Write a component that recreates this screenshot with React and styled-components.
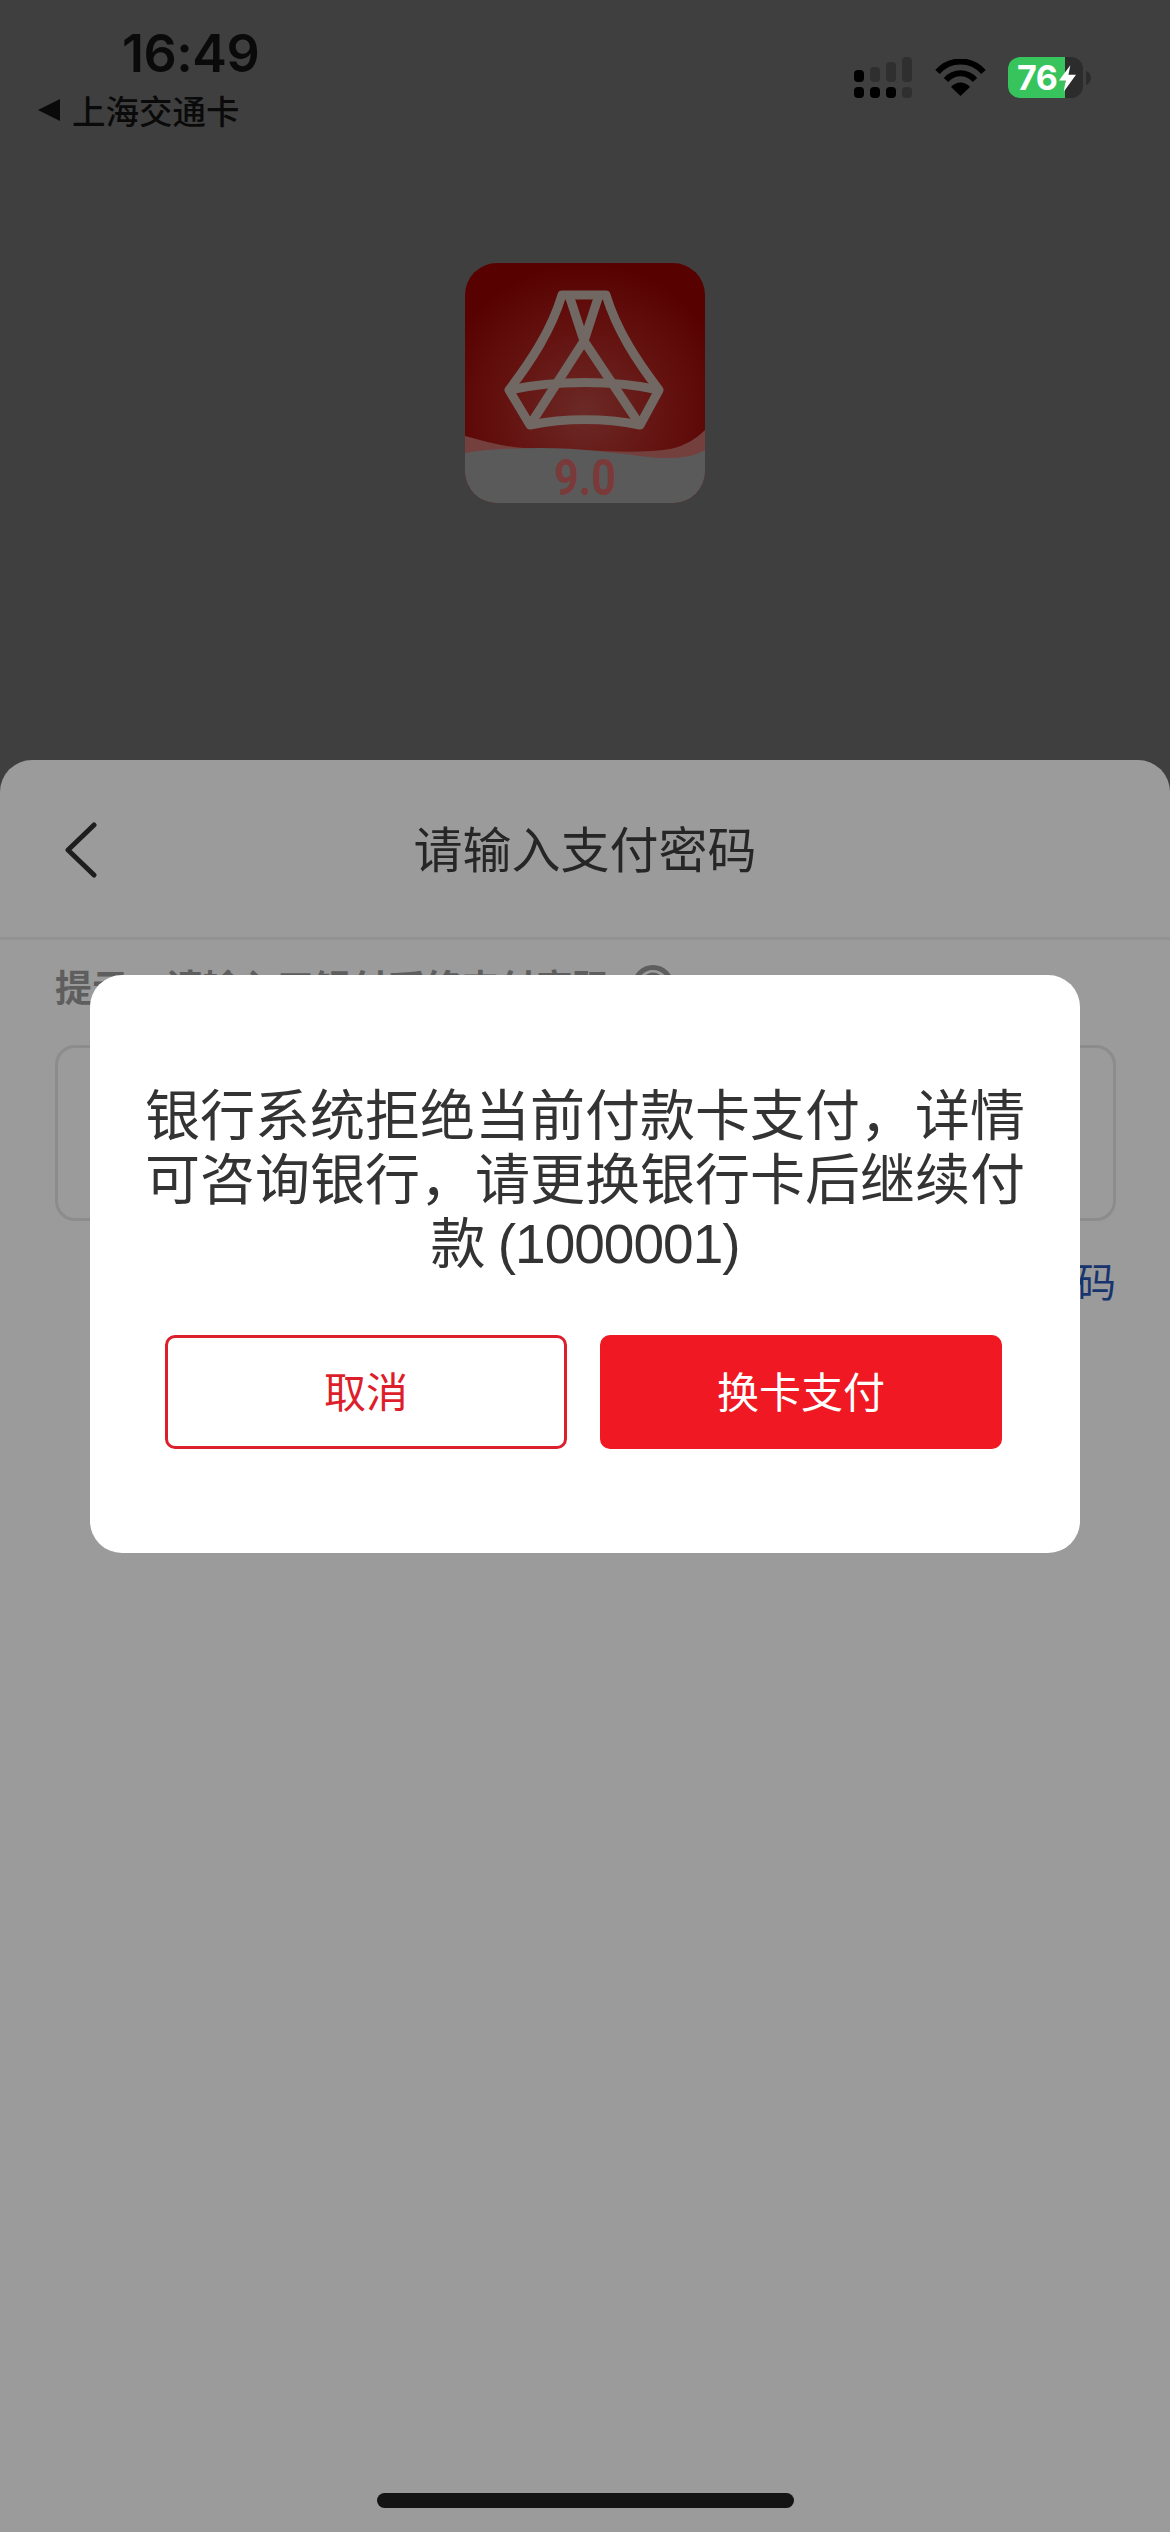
import React from "react";
import styled, { createGlobalStyle } from "styled-components";

const Global = createGlobalStyle`
  html, body { margin: 0; padding: 0; background: #9b9b9b; }
  body { font-family: "Liberation Sans", "Noto Sans CJK SC", sans-serif; }
`;

const CJK = `"Noto Sans CJK SC", "Liberation Sans", sans-serif`;

const Page = styled.div`
  position: relative;
  width: 1170px;
  height: 2532px;
  overflow: hidden;
  background: #3f3f3f;
  display: flex;
  flex-direction: column;
`;
const StatusBar = styled.div`
  height: 140px;
  flex: none;
  display: flex;
  justify-content: space-between;
  padding: 28px 79px 0 38px;
  box-sizing: border-box;
`;
const StatusLeft = styled.div`
  display: flex;
  flex-direction: column;
`;
const Time = styled.div`
  font-family: "Inter", "Liberation Sans", sans-serif;
  font-size: 52px;
  line-height: 52px;
  font-weight: 600;
  color: #0a0a0a;
  margin-left: 84px;
  letter-spacing: -0.5px;
`;
const BackApp = styled.div`
  display: flex;
  align-items: center;
  gap: 12px;
  margin-top: 10px;
  font-family: ${CJK};
  font-size: 33.5px;
  font-weight: 500;
  line-height: 40px;
  color: #0a0a0a;
`;
const Triangle = styled.span`
  width: 0;
  height: 0;
  border-top: 11px solid transparent;
  border-bottom: 11px solid transparent;
  border-right: 22px solid #0a0a0a;
`;
const StatusRight = styled.div`
  display: flex;
  align-items: flex-start;
  gap: 22px;
  padding-top: 29px;
`;
const SignalIcon = styled.svg`
  margin-right: 1px;
`;
const WifiIcon = styled.svg`
  margin-top: 2px;
`;
const Battery = styled.div`
  position: relative;
  width: 75px;
  height: 41px;
  border-radius: 12px;
  overflow: hidden;
  background: #2c2c2c;
  display: flex;
`;
const BatteryFill = styled.div`
  width: 57px;
  background: #37c45c;
`;
const BatteryText = styled.span`
  position: absolute;
  left: 9px;
  top: 0;
  font-family: "Inter", "Liberation Sans", sans-serif;
  font-size: 34px;
  line-height: 41px;
  font-weight: 700;
  color: #fff;
  letter-spacing: -0.5px;
`;
const Bolt = styled.svg`
  position: absolute;
  left: 51px;
  top: 8px;
`;
const BatteryWrap = styled.div`
  display: flex;
  align-items: center;
  gap: 3px;
`;
const LogoArea = styled.div`
  height: 620px;
  flex: none;
  display: flex;
  justify-content: center;
  padding-top: 123px;
  box-sizing: border-box;
`;
const Sheet = styled.div`
  flex: 1;
  background: #9b9b9b;
  border-radius: 32px 32px 0 0;
  display: flex;
  flex-direction: column;
`;
const SheetHeader = styled.div`
  position: relative;
  height: 172px;
  padding-bottom: 5px;
  flex: none;
  display: flex;
  align-items: center;
  justify-content: center;
  border-bottom: 3px solid #929292;
  font-family: ${CJK};
  font-size: 49px;
  color: #262626;
`;
const BackIcon = styled.svg`
  position: absolute;
  left: 62px;
  top: 62px;
`;
const SheetBody = styled.div`
  padding: 18px 54px 0 55px;
  display: flex;
  flex-direction: column;
`;
const Tip = styled.div`
  display: flex;
  align-items: center;
  gap: 22px;
  height: 56px;
  font-family: ${CJK};
  font-size: 37px;
  font-weight: 700;
  color: #5e5e5e;
`;
const PasswordBox = styled.div`
  margin-top: 31px;
  height: 176px;
  box-sizing: border-box;
  border: 3px solid #8c8c8c;
  border-radius: 20px;
`;
const Forgot = styled.div`
  margin-top: 31px;
  text-align: right;
  font-family: ${CJK};
  font-size: 40px;
  line-height: 56px;
  color: #17346e;
`;
const Modal = styled.div`
  position: absolute;
  left: 90px;
  top: 975px;
  width: 990px;
  height: 578px;
  box-sizing: border-box;
  padding: 104px 55px 0;
  background: #fff;
  border-radius: 32px;
  display: flex;
  flex-direction: column;
  align-items: center;
`;
const Message = styled.div`
  width: 880px;
  font-family: ${CJK};
  font-size: 55px;
  line-height: 64px;
  color: #333;
  text-align: center;
`;
const Code = styled.span`
  font-family: "Liberation Sans", sans-serif;
  letter-spacing: -1px;
`;
const Actions = styled.div`
  margin: 59px 3px 0 0;
  display: flex;
  gap: 33px;
`;
const Button = styled.div`
  width: 402px;
  height: 114px;
  box-sizing: border-box;
  padding-bottom: 6px;
  border-radius: 10px;
  display: flex;
  align-items: center;
  justify-content: center;
  font-family: ${CJK};
  font-size: 42px;
  border: 3px solid ${({ $primary }) => ($primary ? "#ef1823" : "#dc1f2b")};
  background: ${({ $primary }) => ($primary ? "#ef1823" : "#fff")};
  color: ${({ $primary }) => ($primary ? "#fff" : "#dc1f2b")};
`;
const HomeBar = styled.div`
  position: absolute;
  left: 377px;
  top: 2493px;
  width: 417px;
  height: 15px;
  border-radius: 8px;
  background: #141414;
`;

const Signal = () => (
  <SignalIcon width="58" height="41" viewBox="0 0 58 41">
    <g fill="#000">
      <rect x="0" y="13" width="10" height="12" rx="4" />
      <rect x="0" y="30" width="10" height="11" rx="4" />
      <rect x="16" y="30" width="10" height="11" rx="4" />
      <rect x="32" y="30" width="10" height="11" rx="4" />
    </g>
    <g fill="#2f2f2f">
      <rect x="16" y="10" width="10" height="15" rx="4" />
      <rect x="32" y="5" width="10" height="20" rx="4" />
      <rect x="48" y="0" width="10" height="25" rx="4" />
      <rect x="48" y="30" width="10" height="11" rx="4" />
    </g>
  </SignalIcon>
);

const Wifi = () => (
  <WifiIcon width="51" height="38" viewBox="0 0 51 38">
    <path d="M2.5 13 C15 -1 36 -1 48.5 13" fill="none" stroke="#000" strokeWidth="6" />
    <path d="M11 21 C19 12 32 12 40 21" fill="none" stroke="#000" strokeWidth="6" />
    <path d="M16 28 C21 22 30 22 35 28 L25.5 37 Z" fill="#000" />
  </WifiIcon>
);

const HelpIcon = () => (
  <svg width="42" height="42" viewBox="0 0 42 42">
    <circle cx="21" cy="21" r="18.5" fill="none" stroke="#5e5e5e" strokeWidth="5" />
    <path d="M14 16 C14 8 28 8 28 16 C28 21 21 21 21 27" fill="none" stroke="#5e5e5e" strokeWidth="5" />
    <circle cx="21" cy="33" r="3" fill="#5e5e5e" />
  </svg>
);

const Logo = () => (
  <svg width="240" height="240" viewBox="0 0 240 240">
    <defs>
      <clipPath id="logoClip">
        <rect width="240" height="240" rx="32" />
      </clipPath>
      <radialGradient id="logoBg" cx="50%" cy="62%" r="62%">
        <stop offset="0%" stopColor="#6b2a26" />
        <stop offset="55%" stopColor="#641210" />
        <stop offset="100%" stopColor="#570200" />
      </radialGradient>
    </defs>
    <g clipPath="url(#logoClip)">
      <rect width="240" height="240" fill="url(#logoBg)" />
      <path d="M0 173 C25 180 50 186 75 186 C120 186 170 192 205 186 C220 183 232 175 240 167 L240 240 L0 240 Z" fill="#74403e" />
      <path d="M0 190 C25 186 50 185 75 185 C115 185 150 190 175 193 C195 196 225 197 240 187 L240 240 L0 240 Z" fill="#5a5a5a" />
      <g fill="none" stroke="#716863" strokeWidth="9" strokeLinejoin="round">
        <path d="M97 32 L141 32 C152 68 172 98 194 127 L175 162 C140 155 100 155 65 162 L44 127 C66 98 86 68 97 32 Z" />
        <path d="M44 127 C90 117 150 117 194 127" />
        <path d="M104 32 L119 78 L175 162" />
        <path d="M134 32 L119 78 L65 162" />
      </g>
      <text x="120" y="232" textAnchor="middle" fontFamily="Roboto, sans-serif" fontWeight="700" fontSize="50" fill="#7a3a3a" textLength="62" lengthAdjust="spacingAndGlyphs">9.0</text>
    </g>
  </svg>
);

export default function App() {
  return (
    <Page>
      <Global />
      <StatusBar>
        <StatusLeft>
          <Time>16:49</Time>
          <BackApp>
            <Triangle />
            上海交通卡
          </BackApp>
        </StatusLeft>
        <StatusRight>
          <Signal />
          <Wifi />
          <BatteryWrap>
            <Battery>
              <BatteryFill />
              <BatteryText>76</BatteryText>
              <Bolt width="17" height="27" viewBox="0 0 18 28">
                <path d="M12 0 L0 16 L7 16 L5 28 L18 10 L10 10 Z" fill="#fff" />
              </Bolt>
            </Battery>
            <svg width="5" height="14" viewBox="0 0 5 14">
              <path d="M0 0 C3 1 5 4 5 7 C5 10 3 13 0 14 Z" fill="#2c2c2c" />
            </svg>
          </BatteryWrap>
        </StatusRight>
      </StatusBar>
      <LogoArea>
        <Logo />
      </LogoArea>
      <Sheet>
        <SheetHeader>
          <BackIcon width="36" height="56" viewBox="0 0 36 56">
            <path d="M32 3 L6 28 L32 53" fill="none" stroke="#1e1e1e" strokeWidth="5" strokeLinecap="round" strokeLinejoin="round" />
          </BackIcon>
          请输入支付密码
        </SheetHeader>
        <SheetBody>
          <Tip>
            提示：请输入工银付币终支付密码
            <HelpIcon />
          </Tip>
          <PasswordBox />
          <Forgot>忘记密码</Forgot>
        </SheetBody>
      </Sheet>
      <Modal>
        <Message>
          银行系统拒绝当前付款卡支付，详情可咨询银行，请更换银行卡后继续付款 <Code>(1000001)</Code>
        </Message>
        <Actions>
          <Button>取消</Button>
          <Button $primary>换卡支付</Button>
        </Actions>
      </Modal>
      <HomeBar />
    </Page>
  );
}
